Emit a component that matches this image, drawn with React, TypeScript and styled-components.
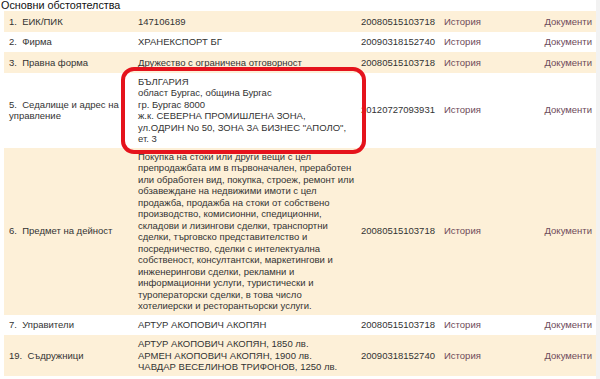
import React from "react";
import styled, { createGlobalStyle } from "styled-components";

const GlobalStyle = createGlobalStyle`
  html, body {
    margin: 0;
    padding: 0;
    background: #f2f2f2;
  }
  body {
    font-family: "Liberation Sans", Arial, sans-serif;
  }
`;

const Page = styled.div`
  position: relative;
  width: 596px;
  height: 379px;
  background: #ffffff;
  overflow: hidden;
`;

const SectionTitle = styled.div`
  height: 11px;
  padding-left: 1px;
  font-size: 10.8px;
  line-height: 10px;
  color: #111;
`;

const Table = styled.div`
  margin-left: 4px;
  width: 592px;
`;

const Row = styled.div<{ $shaded: boolean }>`
  display: grid;
  grid-template-columns: 130px 223px 83px 1fr auto;
  min-height: 20.5px;
  background: ${(p) => (p.$shaded ? "#fdf0d8" : "#ffffff")};
  font-size: 9.5px;
  line-height: 11.5px;
  color: #333333;
`;

const Cell = styled.div<{ $align?: "left" | "right"; $pl?: number; $pr?: number }>`
  display: flex;
  align-items: center;
  justify-content: ${(p) => (p.$align === "right" ? "flex-end" : "flex-start")};
  padding: 3px ${(p) => p.$pr ?? 4}px 3px ${(p) => p.$pl ?? 4}px;
  box-sizing: border-box;
`;

const LabelText = styled.span``;

const Lines = styled.div`
  white-space: nowrap;
`;

const LinkText = styled.span`
  color: #6e4a58;
`;

const Highlight = styled.div`
  position: absolute;
  left: 121px;
  top: 67px;
  width: 245px;
  height: 87px;
  box-sizing: border-box;
  border: 4px solid #e5131c;
  border-radius: 13px;
  pointer-events: none;
`;

type Item = {
  num: string;
  label: string;
  value: string[];
  stamp: string;
};

const items: Item[] = [
  { num: "1.", label: "ЕИК/ПИК", value: ["147106189"], stamp: "20080515103718" },
  { num: "2.", label: "Фирма", value: ["ХРАНЕКСПОРТ БГ"], stamp: "20090318152740" },
  {
    num: "3.",
    label: "Правна форма",
    value: ["Дружество с ограничена отговорност"],
    stamp: "20080515103718",
  },
  {
    num: "5.",
    label: "Седалище и адрес на управление",
    value: [
      "БЪЛГАРИЯ",
      "област Бургас, община Бургас",
      "гр. Бургас 8000",
      "ж.к. СЕВЕРНА ПРОМИШЛЕНА ЗОНА,",
      'ул.ОДРИН No 50, ЗОНА ЗА БИЗНЕС "АПОЛО",',
      "ет. 3",
    ],
    stamp: "20120727093931",
  },
  {
    num: "6.",
    label: "Предмет на дейност",
    value: [
      "Покупка на стоки или други вещи с цел",
      "препродажбата им в първоначален, преработен",
      "или обработен вид, покупка, строеж, ремонт или",
      "обзавеждане на недвижими имоти с цел",
      "продажба, продажба на стоки от собствено",
      "производство, комисионни, спедиционни,",
      "складови и лизингови сделки, транспортни",
      "сделки, търговско представителство и",
      "посредничество, сделки с интелектуална",
      "собственост, консултантски, маркетингови и",
      "инженерингови сделки, рекламни и",
      "информационни услуги, туристически и",
      "туроператорски сделки, в това число",
      "хотелиерски и ресторантьорски услуги.",
    ],
    stamp: "20080515103718",
  },
  {
    num: "7.",
    label: "Управители",
    value: ["АРТУР АКОПОВИЧ АКОПЯН"],
    stamp: "20080515103718",
  },
  {
    num: "19.",
    label: "Съдружници",
    value: [
      "АРТУР АКОПОВИЧ АКОПЯН, 1850 лв.",
      "АРМЕН АКОПОВИЧ АКОПЯН, 1900 лв.",
      "ЧАВДАР ВЕСЕЛИНОВ ТРИФОНОВ, 1250 лв.",
    ],
    stamp: "20090318152740",
  },
];

export default function App() {
  return (
    <>
      <GlobalStyle />
      <Page>
        <SectionTitle>Основни обстоятелства</SectionTitle>
        <Table>
          {items.map((it, i) => (
            <Row key={it.num} $shaded={i % 2 === 0}>
              <Cell $pl={5}>
                <LabelText>{`${it.num}\u00a0\u00a0${it.label}`}</LabelText>
              </Cell>
              <Cell>
                <Lines>
                  {it.value.map((line, j) => (
                    <React.Fragment key={j}>
                      {j > 0 && <br />}
                      {line}
                    </React.Fragment>
                  ))}
                </Lines>
              </Cell>
              <Cell>{it.stamp}</Cell>
              <Cell>
                <LinkText>История</LinkText>
              </Cell>
              <Cell $align="right">
                <LinkText>Документи</LinkText>
              </Cell>
            </Row>
          ))}
        </Table>
        <Highlight />
      </Page>
    </>
  );
}
